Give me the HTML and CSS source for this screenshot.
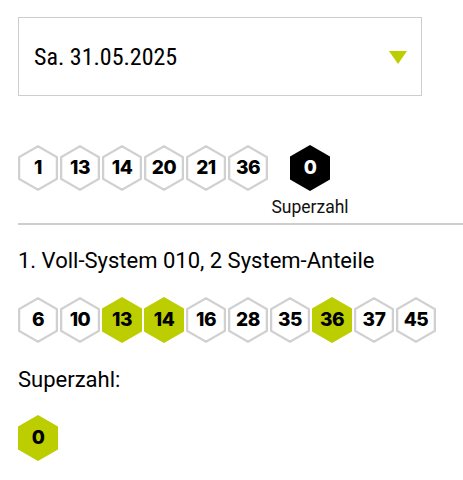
FILE: index.html
```html
<!DOCTYPE html>
<html>
  <head>
    <meta name="viewport" content="width=device-width, initial-scale=1">
    <link rel="stylesheet" href="styles.css">
  </head>
  <body>
    <div class="select">
      <span class="select-text">Sa. 31.05.2025</span>
      <span class="arrow"></span>
    </div>

    <div class="draw">
      <div class="balls">
        <div class="ball"><span>1</span></div>
        <div class="ball"><span>13</span></div>
        <div class="ball"><span>14</span></div>
        <div class="ball"><span>20</span></div>
        <div class="ball"><span>21</span></div>
        <div class="ball"><span>36</span></div>
      </div>
      <div class="super">
        <div class="ball black"><span>0</span></div>
        <div class="super-label">Superzahl</div>
      </div>
    </div>

    <hr class="divider">

    <h2 class="title">1. Voll-System 010, 2 System-Anteile</h2>
    <div class="balls">
      <div class="ball"><span>6</span></div>
      <div class="ball"><span>10</span></div>
      <div class="ball hit"><span>13</span></div>
      <div class="ball hit"><span>14</span></div>
      <div class="ball"><span>16</span></div>
      <div class="ball"><span>28</span></div>
      <div class="ball"><span>35</span></div>
      <div class="ball hit"><span>36</span></div>
      <div class="ball"><span>37</span></div>
      <div class="ball"><span>45</span></div>
    </div>

    <h2 class="title sz-title">Superzahl:</h2>
    <div class="balls">
      <div class="ball hit"><span>0</span></div>
    </div>
  </body>
</html>
```
FILE: styles.css
```css
body { margin: 0; padding: 17px 0 0 18px; font-family: Roboto, sans-serif; color: #111; background: #fff }

.select { box-sizing: border-box; width: 404px; height: 79px; border: 1px solid #cdcdcd; display: flex; align-items: center; justify-content: space-between; padding: 0 14px 0 15px }
.select-text { font-size: 24px; font-stretch: 75%; color: #000 }
.arrow { width: 0; height: 0; border-left: 9.5px solid transparent; border-right: 9.5px solid transparent; border-top: 13px solid #bccd00; margin-top: 2px }

.draw { display: flex; gap: 2px; margin-top: 49px }
.balls { display: flex; gap: 2px }
.super { width: 80px; display: flex; flex-direction: column; align-items: center }
.super-label { font-size: 17.5px; line-height: 20px; margin-top: 6px }

.ball { width: 40px; height: 46px; flex: none; display: flex; align-items: center; justify-content: center; background: #d0d0d0;
  clip-path: polygon(50% 0, 100% 25%, 100% 75%, 50% 100%, 0 75%, 0 25%) }
.ball span { width: 35.5px; height: 40.8px; display: flex; align-items: center; justify-content: center; background: #fff;
  clip-path: polygon(50% 0, 100% 25%, 100% 75%, 50% 100%, 0 75%, 0 25%);
  font-family: Inter, sans-serif; font-weight: 800; font-size: 19px; color: #000; letter-spacing: -0.4px }
.ball.hit, .ball.hit span { background: #bccd00 }
.ball.black, .ball.black span { background: #000; color: #fff }

.divider { border: 0; height: 2px; background: #cdcdcd; margin: 6px 0 0 0 }

.title { font-size: 22px; line-height: 26px; font-weight: normal; margin: 23px 0 23px 0; color: #000 }
.sz-title { margin: 24px 0 22px 0 }
```
